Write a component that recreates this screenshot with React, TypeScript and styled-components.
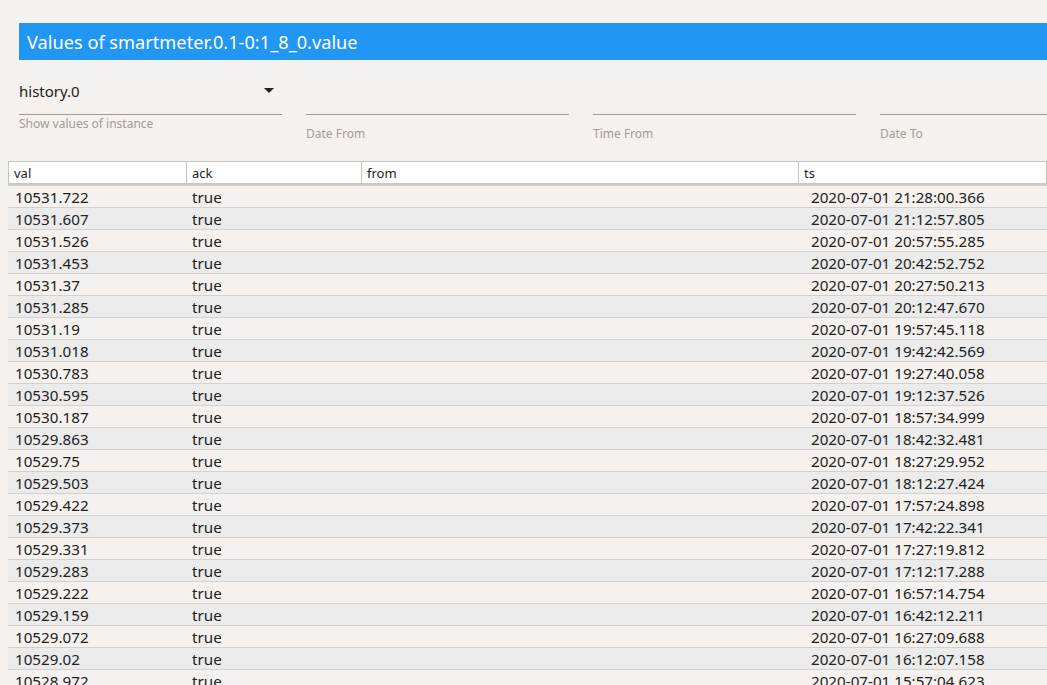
import React from "react";
import styled, { createGlobalStyle } from "styled-components";

const Global = createGlobalStyle`
  html, body { margin: 0; padding: 0; background: #f4f1ee; overflow: hidden; }
  body { font-family: "Noto Sans", "Open Sans", sans-serif; }
`;

const Page = styled.div`
  width: 1047px;
  height: 685px;
  overflow: hidden;
  padding-top: 23px;
  box-sizing: border-box;
`;

const TitleBar = styled.div`
  margin-left: 19px;
  height: 37px;
  background: #2196f3;
  color: #fff;
  font-size: 18.2px;
  line-height: 38px;
  padding-left: 8px;
  white-space: nowrap;
`;

const Filters = styled.div`
  display: grid;
  grid-template-columns: 263px 263px 263px 263px;
  column-gap: 24px;
  margin-left: 19px;
  height: 101px;
`;

const Field = styled.div`
  display: flex;
  flex-direction: column;
`;

const SelectBox = styled.div`
  height: 55px;
  border-bottom: 1px solid #9e9a98;
  display: flex;
  align-items: flex-end;
  justify-content: space-between;
  padding-bottom: 13px;
  box-sizing: border-box;
  font-size: 15px;
  color: #222;
`;

const Caret = styled.span`
  width: 0;
  height: 0;
  border-left: 5px solid transparent;
  border-right: 5px solid transparent;
  border-top: 5px solid #222;
  margin-right: 8px;
  margin-bottom: 8px;
`;

const InputLine = styled.div`
  height: 55px;
  border-bottom: 1px solid #9e9a98;
  box-sizing: border-box;
`;

const Helper = styled.div<{ $top: number }>`
  margin-top: ${(p) => p.$top}px;
  font-size: 12px;
  color: #a09c9a;
  line-height: 16px;
`;

const Table = styled.div`
  margin-left: 8px;
`;

const cols = "178px 175px 437px 1fr";

const HeadRow = styled.div`
  display: grid;
  grid-template-columns: ${cols};
  background: #fff;
  border: 1px solid #c6c3c1;
  border-bottom: 2px solid #c9c6c4;
  height: 24px;
  box-sizing: border-box;
`;

const HeadCell = styled.div<{ $first?: boolean }>`
  font-size: 13px;
  color: #222;
  line-height: 23px;
  padding-left: 5px;
  margin-left: ${(p) => (p.$first ? "0" : "-1px")};
  border-left: ${(p) => (p.$first ? "none" : "1px solid #c6c3c1")};
`;

const Row = styled.div<{ $alt: boolean }>`
  display: grid;
  grid-template-columns: ${cols};
  height: 22px;
  box-sizing: border-box;
  border-top: 1px solid #d3d1cf;
  background: ${(p) => (p.$alt ? "#ebebeb" : "#f4f1ee")};
  font-size: 15.2px;
  color: #222;
  line-height: 23px;
`;

const Cell = styled.div<{ $pad: number }>`
  padding-left: ${(p) => p.$pad}px;
  white-space: nowrap;
`;

const data: [string, string][] = [
  ["10531.722", "21:28:00.366"],
  ["10531.607", "21:12:57.805"],
  ["10531.526", "20:57:55.285"],
  ["10531.453", "20:42:52.752"],
  ["10531.37", "20:27:50.213"],
  ["10531.285", "20:12:47.670"],
  ["10531.19", "19:57:45.118"],
  ["10531.018", "19:42:42.569"],
  ["10530.783", "19:27:40.058"],
  ["10530.595", "19:12:37.526"],
  ["10530.187", "18:57:34.999"],
  ["10529.863", "18:42:32.481"],
  ["10529.75", "18:27:29.952"],
  ["10529.503", "18:12:27.424"],
  ["10529.422", "17:57:24.898"],
  ["10529.373", "17:42:22.341"],
  ["10529.331", "17:27:19.812"],
  ["10529.283", "17:12:17.288"],
  ["10529.222", "16:57:14.754"],
  ["10529.159", "16:42:12.211"],
  ["10529.072", "16:27:09.688"],
  ["10529.02", "16:12:07.158"],
  ["10528.972", "15:57:04.623"],
];

export default function App() {
  return (
    <Page>
      <Global />
      <TitleBar>Values of smartmeter.0.1-0:1_8_0.value</TitleBar>
      <Filters>
        <Field>
          <SelectBox>
            <span>history.0</span>
            <Caret />
          </SelectBox>
          <Helper $top={1}>Show values of instance</Helper>
        </Field>
        <Field>
          <InputLine />
          <Helper $top={11}>Date From</Helper>
        </Field>
        <Field>
          <InputLine />
          <Helper $top={11}>Time From</Helper>
        </Field>
        <Field>
          <InputLine />
          <Helper $top={11}>Date To</Helper>
        </Field>
      </Filters>
      <Table>
        <HeadRow>
          <HeadCell $first>val</HeadCell>
          <HeadCell>ack</HeadCell>
          <HeadCell>from</HeadCell>
          <HeadCell>ts</HeadCell>
        </HeadRow>
        {data.map(([v, t], i) => (
          <Row key={i} $alt={i % 2 === 1}>
            <Cell $pad={7}>{v}</Cell>
            <Cell $pad={6}>true</Cell>
            <Cell $pad={0}></Cell>
            <Cell $pad={13}>2020-07-01 {t}</Cell>
          </Row>
        ))}
      </Table>
    </Page>
  );
}
